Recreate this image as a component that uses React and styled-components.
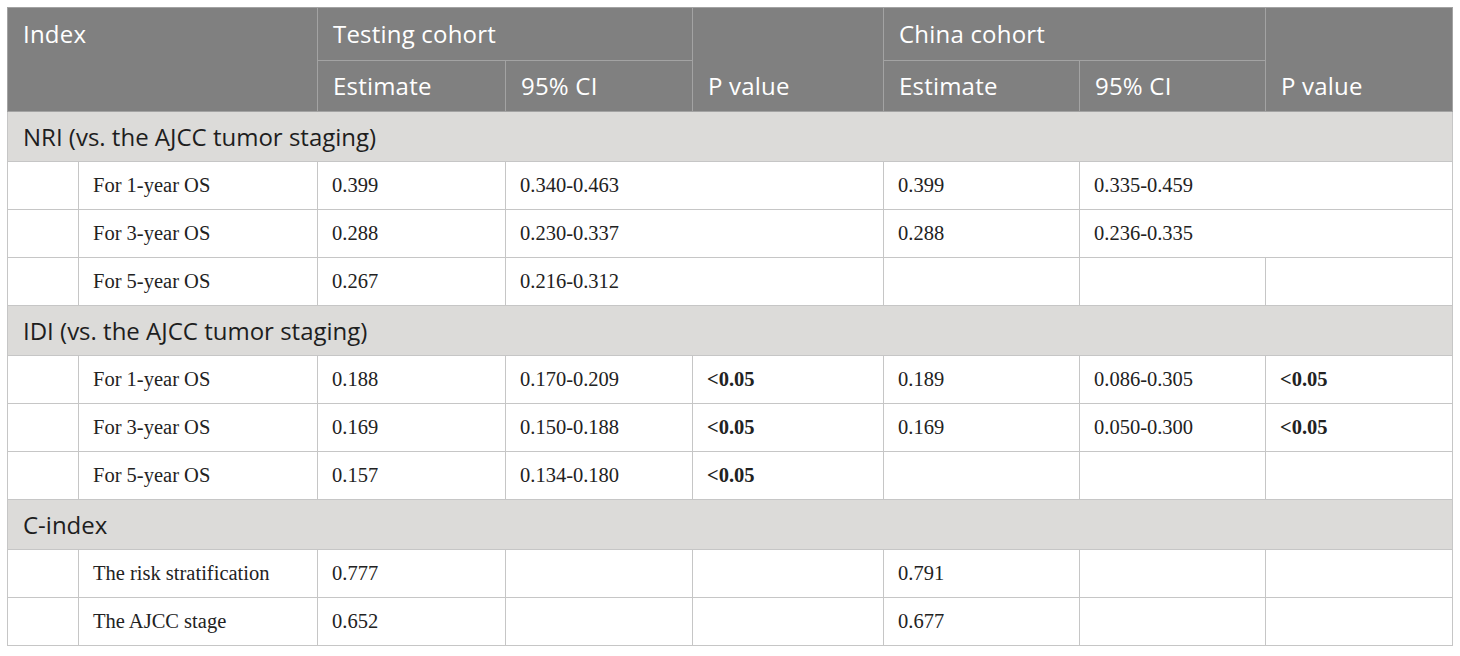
import React from "react";
import styled, { createGlobalStyle } from "styled-components";

const Global = createGlobalStyle`
  body { margin: 0; background: #ffffff; }
`;

const Page = styled.div`
  padding: 7px;
`;

const Table = styled.table`
  border-collapse: collapse;
  table-layout: fixed;
  width: 1446px;
  border: 1px solid #c6c6c6;
`;

const HeadCell = styled.th`
  background: #808080;
  color: #ffffff;
  font-family: "Open Sans", sans-serif;
  font-weight: 400;
  font-size: 24px;
  letter-spacing: 0.2px;
  line-height: 30px;
  text-align: left;
  padding: 0 15px;
  border: 1px solid #a3a3a3;
  vertical-align: ${(p) => p.$valign || "middle"};
  padding-top: ${(p) => (p.$valign === "top" ? "11px" : "0")};
  padding-bottom: ${(p) => (p.$valign === "bottom" ? "10px" : "0")};
`;

const HeadRow = styled.tr`
  height: ${(p) => p.$h}px;
`;

const SectionRow = styled.tr`
  height: 50px;
`;

const SectionCell = styled.td`
  background: #dcdbd9;
  color: #1e1e1e;
  font-family: "Open Sans", sans-serif;
  font-size: 24px;
  line-height: 30px;
  padding: 0 15px;
  border: 1px solid #c6c6c6;
`;

const DataRow = styled.tr`
  height: 48px;
`;

const Cell = styled.td`
  font-family: "Liberation Serif", "Times New Roman", serif;
  font-size: 20.5px;
  color: #222222;
  padding: 0 14px;
  border: 1px solid #c6c6c6;
  font-weight: ${(p) => (p.$bold ? 700 : 400)};
  white-space: nowrap;
`;

const widths = [71, 239, 188, 187, 191, 196, 186, 187];

const sections = [
  {
    title: "NRI (vs. the AJCC tumor staging)",
    rows: [
      { label: "For 1-year OS", cells: [["0.399"], ["0.340-0.463", 2], ["0.399"], ["0.335-0.459", 2]] },
      { label: "For 3-year OS", cells: [["0.288"], ["0.230-0.337", 2], ["0.288"], ["0.236-0.335", 2]] },
      { label: "For 5-year OS", cells: [["0.267"], ["0.216-0.312", 2], [""], [""], [""]] },
    ],
  },
  {
    title: "IDI (vs. the AJCC tumor staging)",
    rows: [
      { label: "For 1-year OS", cells: [["0.188"], ["0.170-0.209"], ["<0.05", 1, true], ["0.189"], ["0.086-0.305"], ["<0.05", 1, true]] },
      { label: "For 3-year OS", cells: [["0.169"], ["0.150-0.188"], ["<0.05", 1, true], ["0.169"], ["0.050-0.300"], ["<0.05", 1, true]] },
      { label: "For 5-year OS", cells: [["0.157"], ["0.134-0.180"], ["<0.05", 1, true], [""], [""], [""]] },
    ],
  },
  {
    title: "C-index",
    rows: [
      { label: "The risk stratification", cells: [["0.777"], [""], [""], ["0.791"], [""], [""]] },
      { label: "The AJCC stage", cells: [["0.652"], [""], [""], ["0.677"], [""], [""]] },
    ],
  },
];

export default function App() {
  return (
    <Page>
      <Global />
      <Table>
        <colgroup>
          {widths.map((w, i) => (
            <col key={i} style={{ width: w }} />
          ))}
        </colgroup>
        <thead>
          <HeadRow $h={53}>
            <HeadCell colSpan={2} rowSpan={2} $valign="top">Index</HeadCell>
            <HeadCell colSpan={2}>Testing cohort</HeadCell>
            <HeadCell rowSpan={2} $valign="bottom">P value</HeadCell>
            <HeadCell colSpan={2}>China cohort</HeadCell>
            <HeadCell rowSpan={2} $valign="bottom">P value</HeadCell>
          </HeadRow>
          <HeadRow $h={51}>
            <HeadCell>Estimate</HeadCell>
            <HeadCell>95% CI</HeadCell>
            <HeadCell>Estimate</HeadCell>
            <HeadCell>95% CI</HeadCell>
          </HeadRow>
        </thead>
        <tbody>
          {sections.map((s) => (
            <React.Fragment key={s.title}>
              <SectionRow>
                <SectionCell colSpan={8}>{s.title}</SectionCell>
              </SectionRow>
              {s.rows.map((r) => (
                <DataRow key={s.title + r.label}>
                  <Cell />
                  <Cell>{r.label}</Cell>
                  {r.cells.map(([t, span, bold], i) => (
                    <Cell key={i} colSpan={span || 1} $bold={bold}>
                      {t}
                    </Cell>
                  ))}
                </DataRow>
              ))}
            </React.Fragment>
          ))}
        </tbody>
      </Table>
    </Page>
  );
}
